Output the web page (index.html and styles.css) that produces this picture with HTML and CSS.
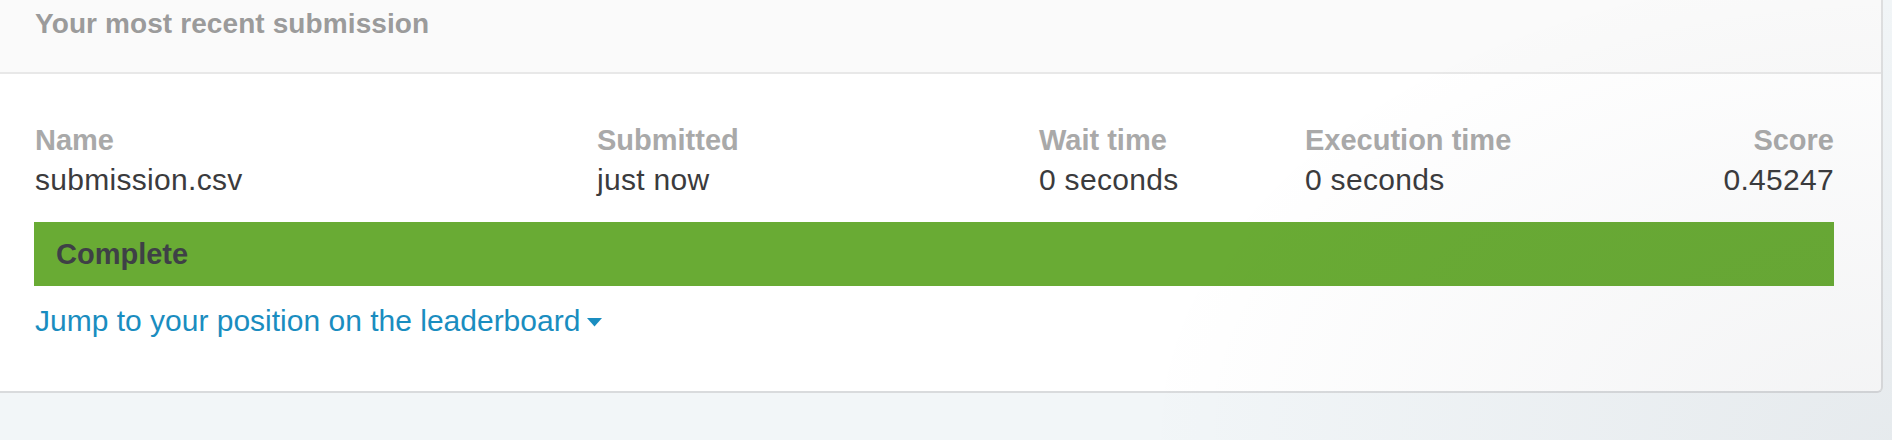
FILE: index.html
```html
<!DOCTYPE html>
<html lang="en">
<head>
<meta charset="utf-8">
<title>Your most recent submission</title>
<link rel="stylesheet" href="styles.css">
</head>
<body>
<div class="page">
  <section class="card">
    <header class="card-head">
      <h2 class="card-title">Your most recent submission</h2>
    </header>
    <div class="card-body">
      <div class="sub-grid">
        <div class="cell">
          <div class="label">Name</div>
          <div class="value">submission.csv</div>
        </div>
        <div class="cell">
          <div class="label">Submitted</div>
          <div class="value">just now</div>
        </div>
        <div class="cell">
          <div class="label">Wait time</div>
          <div class="value">0 seconds</div>
        </div>
        <div class="cell">
          <div class="label">Execution time</div>
          <div class="value">0 seconds</div>
        </div>
        <div class="cell cell-right">
          <div class="label">Score</div>
          <div class="value">0.45247</div>
        </div>
      </div>
      <div class="status">Complete</div>
      <div class="jump-row">
        <a class="jump" href="#">Jump to your position on the leaderboard<svg class="caret" width="15" height="9" viewBox="0 0 15 9" aria-hidden="true"><polygon points="0,0 15,0 7.5,8.5" fill="currentColor"/></svg></a>
      </div>
    </div>
  </section>
</div>
</body>
</html>
```

FILE: styles.css
```css
html, body {
  margin: 0;
  padding: 0;
}

body {
  background: #f2f6f8;
  font-family: "Liberation Sans", Arial, sans-serif;
  height: 440px;
  overflow: hidden;
  position: relative;
}

body::after {
  content: "";
  position: absolute;
  inset: 0;
  pointer-events: none;
  background: radial-gradient(ellipse 40% 110% at 100% 100%, rgba(40, 50, 70, 0.06), rgba(40, 50, 70, 0) 100%);
}

.page {
  display: flex;
  padding-right: 9px;
}

.card {
  flex: 1;
  background: #ffffff;
  border-right: 2px solid #dedfe0;
  border-bottom: 2px solid #d9dbdd;
  border-bottom-right-radius: 6px;
  overflow: hidden;
}

.card-head {
  background: #fafafa;
  padding: 4px 34px 28px 35px;
  border-bottom: 2px solid #e8e8e8;
}

.card-title {
  margin: 0;
  font-size: 28px;
  line-height: 40px;
  font-weight: 700;
  color: #9b9b9b;
  letter-spacing: 0.1px;
}

.card-body {
  padding: 46px 47px 50px 34px;
}

.sub-grid {
  display: grid;
  grid-template-columns: 562px 442px 266px 1fr auto;
  padding-left: 1px;
}

.cell-right {
  text-align: right;
}

.label {
  font-size: 29px;
  line-height: 40px;
  font-weight: 700;
  color: #a9a9a9;
}

.value {
  font-size: 30px;
  line-height: 40px;
  color: #3b3b3d;
  letter-spacing: 0.3px;
}

.status {
  margin-top: 22px;
  height: 64px;
  display: flex;
  align-items: center;
  padding: 0 22px;
  background: #69ab34;
  font-size: 29px;
  font-weight: 700;
  color: #3e4046;
}

.jump-row {
  display: flex;
  height: 40px;
  margin-top: 15px;
  padding-left: 1px;
}

.jump {
  display: flex;
  align-items: center;
  gap: 7px;
  font-size: 30px;
  line-height: 40px;
  color: #1a8dc0;
  text-decoration: none;
}

.caret {
  display: block;
  margin-top: 3px;
}
```
